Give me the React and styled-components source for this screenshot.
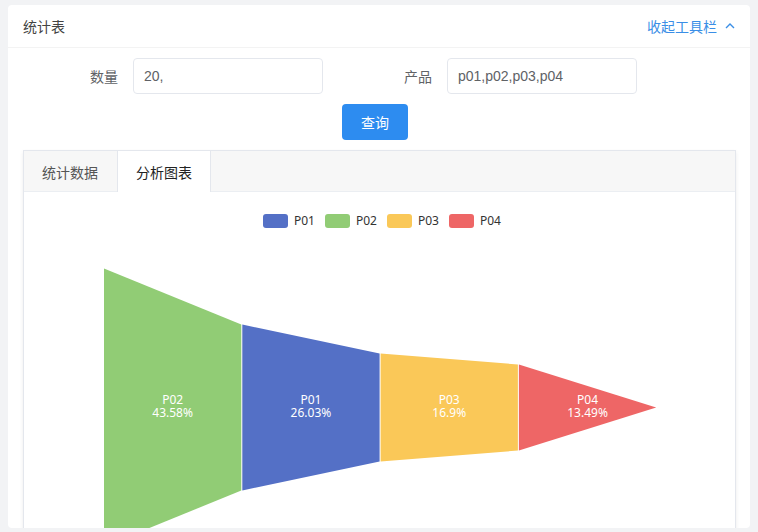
import React, { useState } from 'react';
import styled, { createGlobalStyle } from 'styled-components';

const GlobalStyle = createGlobalStyle`
  html, body {
    margin: 0;
    padding: 0;
    background: #f2f3f5;
    font-family: "Liberation Sans", "Noto Sans CJK SC", sans-serif;
  }
`;

const Page = styled.div`
  padding: 5px 8px 0 8px;
  height: 532px;
  box-sizing: border-box;
`;

const Card = styled.div`
  background: #fff;
  border-radius: 4px;
  height: 523px;
  overflow: hidden;
`;

const CardHeader = styled.div`
  display: flex;
  justify-content: space-between;
  align-items: center;
  height: 42px;
  padding: 0 15px;
  border-bottom: 1px solid #f3f3f3;
`;

const Title = styled.span`
  font-size: 14px;
  color: #444;
  font-family: "Noto Sans CJK SC", sans-serif;
`;

const Collapse = styled.span`
  display: flex;
  align-items: center;
  gap: 8px;
  font-size: 14px;
  color: #3a8ee6;
  font-family: "Noto Sans CJK SC", sans-serif;
  cursor: pointer;
`;

const Form = styled.div`
  display: flex;
  gap: 24px;
  padding: 10px 0 0 25px;
`;

const FormItem = styled.div`
  display: flex;
  align-items: center;
`;

const Label = styled.label`
  width: 100px;
  box-sizing: border-box;
  padding-right: 15px;
  text-align: right;
  font-size: 14px;
  color: #606266;
  font-family: "Noto Sans CJK SC", sans-serif;
`;

const Input = styled.input`
  width: 190px;
  height: 36px;
  box-sizing: border-box;
  border: 1px solid #e4e7ed;
  border-radius: 4px;
  padding: 0 10px;
  font-size: 14px;
  color: #606266;
  font-family: "Liberation Sans", sans-serif;
  outline: none;
`;

const ButtonRow = styled.div`
  display: flex;
  padding: 10px 0 0 334px;
`;

const Button = styled.button`
  width: 66px;
  height: 36px;
  border: none;
  border-radius: 4px;
  background: #2d8cf0;
  color: #fff;
  font-size: 14px;
  font-family: "Noto Sans CJK SC", sans-serif;
  cursor: pointer;
`;

const TabCard = styled.div`
  margin: 10px 14px 0 15px;
  border: 1px solid #e4e7ed;
  box-shadow: 0 2px 4px rgba(0, 0, 0, 0.08);
`;

const TabBar = styled.div`
  display: flex;
  height: 40px;
  background: #f7f7f7;
  border-bottom: 1px solid #ebeef2;
`;

const Tab = styled.div`
  display: flex;
  align-items: center;
  padding: 0 18px;
  margin-bottom: -1px;
  font-size: 14px;
  font-family: "Noto Sans CJK SC", sans-serif;
  color: ${(p) => (p.$active ? '#222' : '#555')};
  background: ${(p) => (p.$active ? '#fff' : 'transparent')};
  border-left: 1px solid ${(p) => (p.$active ? '#e4e7ed' : 'transparent')};
  border-right: 1px solid ${(p) => (p.$active ? '#e4e7ed' : 'transparent')};
  cursor: pointer;
  &:first-child {
    border-left: none;
  }
`;

const Panel = styled.div`
  height: 337px;
  overflow: hidden;
  display: flex;
  flex-direction: column;
  align-items: center;
`;

const Legend = styled.div`
  display: flex;
  gap: 10px;
  padding-top: 20px;
  margin-left: 5px;
`;

const LegendItem = styled.div`
  display: flex;
  align-items: center;
  gap: 6px;
  font-size: 12px;
  color: #333;
  font-family: "Noto Sans", sans-serif;
`;

const Swatch = styled.span`
  width: 25px;
  height: 14px;
  border-radius: 3px;
  background: ${(p) => p.$color};
`;

const ChartSvg = styled.svg`
  display: block;
  margin-top: auto;
`;

const data = [
  { name: 'P02', value: 43.58, color: '#91cc75' },
  { name: 'P01', value: 26.03, color: '#5470c6' },
  { name: 'P03', value: 16.9, color: '#fac858' },
  { name: 'P04', value: 13.49, color: '#ee6666' },
];

const legendOrder = ['P01', 'P02', 'P03', 'P04'];

function Funnel() {
  const x0 = 81;
  const segW = 137.3;
  const gap = 1;
  const cy = 215.5;
  const full = 278;
  const max = data[0].value;
  const h = (v) => (full * v) / max;
  return (
    <ChartSvg width="713" height="296" viewBox="0 41 713 296">
      {data.map((d, i) => {
        const left = x0 + i * (segW + gap);
        const right = left + segW;
        const hl = h(d.value) / 2;
        const hr = i < data.length - 1 ? h(data[i + 1].value) / 2 : 0;
        const pts = `${left},${cy - hl} ${right},${cy - hr} ${right},${cy + hr} ${left},${cy + hl}`;
        const cx = (left + right) / 2;
        return (
          <g key={d.name}>
            <polygon points={pts} fill={d.color} />
            <text
              x={cx}
              y={cy - 4}
              textAnchor="middle"
              fill="#fff"
              fontSize="12"
              fontFamily="Noto Sans, sans-serif"
            >
              {d.name}
            </text>
            <text
              x={cx}
              y={cy + 9}
              textAnchor="middle"
              fill="#fff"
              fontSize="12"
              fontFamily="Noto Sans, sans-serif"
            >
              {d.value}%
            </text>
          </g>
        );
      })}
    </ChartSvg>
  );
}

export default function App() {
  const [tab, setTab] = useState(1);
  return (
    <>
      <GlobalStyle />
      <Page>
        <Card>
          <CardHeader>
            <Title>统计表</Title>
            <Collapse>
              收起工具栏
              <svg width="10" height="8" viewBox="0 0 10 8">
                <polyline points="1,6 5,2 9,6" fill="none" stroke="#3a8ee6" strokeWidth="1.4" />
              </svg>
            </Collapse>
          </CardHeader>
          <Form>
            <FormItem>
              <Label>数量</Label>
              <Input defaultValue="20," />
            </FormItem>
            <FormItem>
              <Label>产品</Label>
              <Input defaultValue="p01,p02,p03,p04" />
            </FormItem>
          </Form>
          <ButtonRow>
            <Button>查询</Button>
          </ButtonRow>
          <TabCard>
            <TabBar>
              <Tab $active={tab === 0} onClick={() => setTab(0)}>统计数据</Tab>
              <Tab $active={tab === 1} onClick={() => setTab(1)}>分析图表</Tab>
            </TabBar>
            <Panel>
              <Legend>
                {legendOrder.map((n) => {
                  const d = data.find((x) => x.name === n);
                  return (
                    <LegendItem key={n}>
                      <Swatch $color={d.color} />
                      {n}
                    </LegendItem>
                  );
                })}
              </Legend>
              <Funnel />
            </Panel>
          </TabCard>
        </Card>
      </Page>
    </>
  );
}
